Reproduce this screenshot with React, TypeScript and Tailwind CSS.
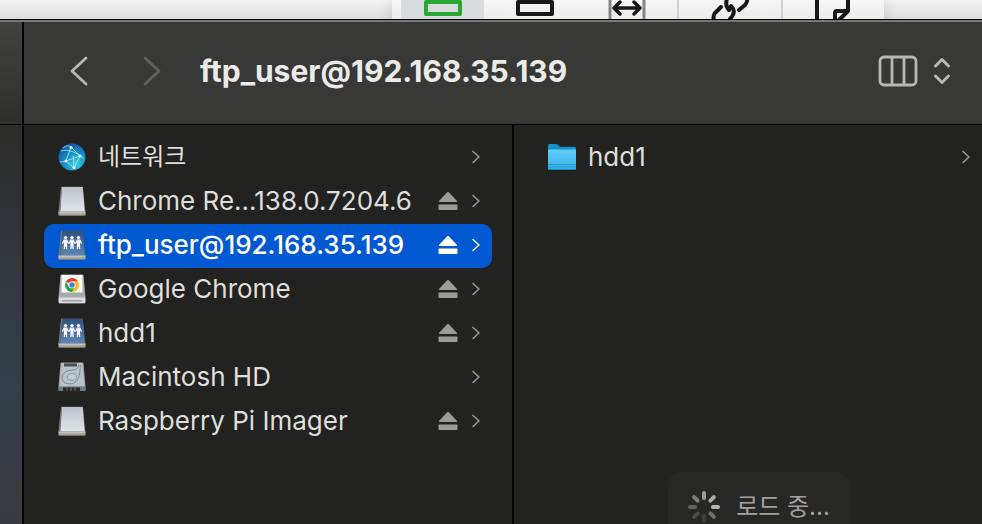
import clsx from "clsx";

type IconName = "network" | "disk" | "server" | "chrome" | "hdd";

type Entry = {
  name: string;
  icon: IconName;
  eject?: boolean;
  selected?: boolean;
  korean?: boolean;
};

const entries: Entry[] = [
  { name: "네트워크", icon: "network", korean: true },
  { name: "Chrome Re...138.0.7204.6", icon: "disk", eject: true },
  { name: "ftp_user@192.168.35.139", icon: "server", eject: true, selected: true },
  { name: "Google Chrome", icon: "chrome", eject: true },
  { name: "hdd1", icon: "server", eject: true },
  { name: "Macintosh HD", icon: "hdd" },
  { name: "Raspberry Pi Imager", icon: "disk", eject: true },
];

function Gradients() {
  return (
    <svg width="0" height="0" className="absolute" aria-hidden="true">
      <defs>
        <radialGradient id="globe" cx="0.65" cy="0.75" r="0.75">
          <stop offset="0" stopColor="#3fd0dc" />
          <stop offset="0.5" stopColor="#1a95cc" />
          <stop offset="1" stopColor="#1059a8" />
        </radialGradient>
        <linearGradient id="silver" x1="0" y1="0" x2="0" y2="1">
          <stop offset="0" stopColor="#bcc4ca" />
          <stop offset="1" stopColor="#dfe5e9" />
        </linearGradient>
        <linearGradient id="blue" x1="0" y1="0" x2="0" y2="1">
          <stop offset="0" stopColor="#33527f" />
          <stop offset="1" stopColor="#5c86b8" />
        </linearGradient>
        <linearGradient id="base" x1="0" y1="0" x2="0" y2="1">
          <stop offset="0" stopColor="#d5d0c8" />
          <stop offset="1" stopColor="#8f8b84" />
        </linearGradient>
        <linearGradient id="folder" x1="0" y1="0" x2="0" y2="1">
          <stop offset="0" stopColor="#62cdf9" />
          <stop offset="1" stopColor="#36b0ea" />
        </linearGradient>
      </defs>
    </svg>
  );
}

function NetworkIcon() {
  return (
    <>
      <circle cx="14" cy="15" r="13.5" fill="url(#globe)" />
      <path
        d="M3 9c7-2 16 1 23 8M13 5 8 19l8 7 6-12-9-9M8 19l14-5M2 20l6-1M13 5C9 3 8 4 5 6M16 26l-1-12"
        fill="none"
        stroke="#b5f0f7"
        strokeWidth="1"
        opacity="0.75"
      />
      <g fill="#e7fcff">
        <circle cx="13" cy="5.500" r="1.500" />
        <circle cx="8" cy="19" r="1.500" />
        <circle cx="22" cy="14" r="1.600" />
        <circle cx="16" cy="25.500" r="1.500" />
      </g>
    </>
  );
}

function Person({ x }: { x: number }) {
  return (
    <g transform={`translate(${x} 0)`} fill="#f4f8ff">
      <circle cx="0" cy="7.600" r="1.700" />
      <path d="M-1.800 9.500h3.600l1.800 4-1 .6-1.200-2 .4 6.900H.5L0 15.400-.5 19h-1.300l.4-6.900-1.200 2-1-.6z" />
    </g>
  );
}

function DiskIcon({ server }: { server?: boolean }) {
  return (
    <>
      <path d="M3.200.6h21.600L27.600 26H.4z" fill="#525456" />
      <path d="M4 1h20.800l2 24.500H2.300z" fill={server ? "url(#blue)" : "url(#silver)"} />
      <path d="M3.600.8 1.200 25.500" stroke="#8a8d90" strokeWidth="0.8" />
      <path d="M.4 25.400h27.200v3.200q0 1.200-1.200 1.200H1.600Q.4 29.800 .4 28.600z" fill="url(#base)" />
      <circle cx="25.3" cy="27.8" r="0.9" fill="#35e03a" />
      {server && (
        <>
          <Person x={7.5} />
          <Person x={14} />
          <Person x={20.5} />
        </>
      )}
    </>
  );
}

function ChromeIcon() {
  return (
    <>
      <path d="M2.500 1.500Q2.600 .5 3.600 .5h20.800q1 0 1.100 1L27.500 23v5q0 1.500-1.500 1.500H2Q.5 29.500 .5 28v-5z" fill="#a6a8aa" />
      <path d="M3.500 1h21v17.500h-21z" fill="#f5f6f7" />
      <path d="M.8 23.500h26.400V28q0 1-1 1H1.800q-1 0-1-1z" fill="#dcdddf" />
      <path d="M4 26h20v1.500H4z" fill="#9a9c9e" />
      <path d="M14 11 8 7.500A7 7 0 0 1 20.100 7.500H14z" fill="#e33b2e" />
      <path d="M14 11V7.500h6.100A7 7 0 0 1 14 18l3-5.200z" fill="#fbc116" />
      <path d="M14 11l3 1.800L14 18A7 7 0 0 1 8 7.500l3 5.300z" fill="#28a147" />
      <circle cx="14" cy="11" r="3.500" fill="#fff" />
      <circle cx="14" cy="11" r="2.700" fill="#3f7fe8" />
    </>
  );
}

function HddIcon() {
  return (
    <>
      <path d="M2.500 1.500Q2.600 .5 3.600 .5h20.800q1 0 1.100 1L27.500 24v4q0 1-1 1h-25q-1 0-1-1v-4z" fill="#98a1a6" />
      <path d="M3.500 1h21l2 23.500h-25z" fill="#b8c3c9" />
      <path d="M6 1.300h13v3.200H6z" fill="#4b5357" />
      <path
        d="M22.500 3c-1 7 0 11-4 16-3 4-12 4-14-1-2-6 4-10 10-10 4 0 6-2 6-5"
        fill="none"
        stroke="#77838a"
        strokeWidth="0.9"
      />
      <ellipse cx="14" cy="15" rx="4.500" ry="3.300" fill="#c3cdd2" stroke="#7e8a91" strokeWidth="0.8" />
      <path d="M.6 24.500h26.800V28q0 1-1 1H1.600q-1 0-1-1z" fill="#737a7d" />
      <path d="M5 25.500h17V29H5z" fill="#272a2b" />
      <path d="M9 26.500v2.500M13 26v3M17 26v3" stroke="#777" />
    </>
  );
}

function FileIcon({ name }: { name: IconName }) {
  return (
    <svg viewBox="0 0 28 30" className="h-[30px] w-7 shrink-0" aria-hidden="true">
      {name === "network" && <NetworkIcon />}
      {name === "disk" && <DiskIcon />}
      {name === "server" && <DiskIcon server />}
      {name === "chrome" && <ChromeIcon />}
      {name === "hdd" && <HddIcon />}
    </svg>
  );
}

function FolderIcon() {
  return (
    <svg viewBox="0 0 28 28" className="h-7 w-7 shrink-0" aria-hidden="true">
      <path d="M0 2.500Q0 1 1.500 1H8q1 0 2 1l1.200 1.200q.6 .6 1.600 .6h13.700Q28 3.800 28 5.500V10H0z" fill="#168fcb" />
      <path d="M0 7.500Q0 6.500 1 6.500h26q1 0 1 1v17.800q0 1.500-1.500 1.500h-25Q0 26.800 0 25.300z" fill="url(#folder)" />
      <path d="M0 21.500h28M0 24h28" stroke="#2194cf" strokeWidth="0.8" />
      <path d="M.5 26.500h27" stroke="#168bc7" />
    </svg>
  );
}

function RowChevron() {
  return (
    <svg viewBox="0 0 8 14" className="h-3.5 w-2 shrink-0" aria-hidden="true">
      <path d="m1 1.500 6 5.500-6 5.500" fill="none" stroke="currentColor" strokeWidth="1.500" strokeLinecap="round" strokeLinejoin="round" />
    </svg>
  );
}

function EjectIcon() {
  return (
    <svg viewBox="0 0 20 20" className="h-5 w-5" fill="currentColor" aria-hidden="true">
      <path d="M9.200 1.300q.8-.7 1.600 0l8 8.500q.8 1.200-.5 1.200H1.700q-1.300 0-.5-1.200z" />
      <rect x="0.500" y="13.500" width="19" height="5.500" rx="1" />
    </svg>
  );
}

function Row({ entry }: { entry: Entry }) {
  return (
    <li
      className={clsx(
        "flex h-11 items-center rounded-[10px] pb-0.5 pl-3.5 pr-3",
        entry.selected ? "bg-[#0059d1] font-medium text-white" : "text-[#dededc]"
      )}
    >
      <FileIcon name={entry.icon} />
      <span className={clsx("ml-3 flex-1 truncate", entry.korean && "text-2xl")}>{entry.name}</span>
      <span className={clsx("flex items-center gap-3.5", entry.selected ? "text-white" : "text-[#9b9b9a]")}>
        {entry.eject && (
          <button type="button" aria-label={`Eject ${entry.name}`}>
            <EjectIcon />
          </button>
        )}
        <RowChevron />
      </span>
    </li>
  );
}

function TopToolbar() {
  return (
    <div className="h-[19px] shrink-0 overflow-hidden bg-linear-to-b from-[#f4f4f4] to-[#dedede]">
      <div className="ml-[392px] flex h-10 w-[492px] bg-linear-to-b from-[#f7f7f7] to-[#dfdfdf] px-[9px] text-[#17181a] shadow-[0_0_16px_rgba(0,0,0,0.14)]">
        <button type="button" aria-label="Green box" className="flex w-[83px] justify-center bg-[#d9dcdf] text-[#27a833]">
          <svg viewBox="0 0 38 20" className="h-5 w-[38px]" fill="none" stroke="currentColor" strokeWidth="4">
            <rect x="2" y="2" width="34" height="12" strokeLinejoin="round" />
          </svg>
        </button>
        <button type="button" aria-label="Box" className="flex w-[101px] justify-center">
          <svg viewBox="0 0 38 20" className="h-5 w-[38px]" fill="none" stroke="currentColor" strokeWidth="4">
            <rect x="2" y="2" width="34" height="12" strokeLinejoin="round" />
          </svg>
        </button>
        <button type="button" aria-label="Width" className="flex w-[94px] justify-center border-r-2 border-[#cdd1d4] pr-2">
          <svg viewBox="0 0 38 20" className="h-5 w-[38px]" fill="none">
            <path d="M2 0v20M36 0v20" stroke="#858585" strokeWidth="3" />
            <path d="M6 8h26M12 2 6 8l6 6M26 2l6 6-6 6" stroke="currentColor" strokeWidth="3.500" strokeLinecap="round" strokeLinejoin="round" />
          </svg>
        </button>
        <button type="button" aria-label="Link" className="flex w-[104px] justify-center border-r-2 border-[#cdd1d4]">
          <svg viewBox="0 0 40 20" className="h-5 w-10" fill="none" stroke="currentColor" strokeWidth="4" strokeLinecap="round">
            <path d="M11 7 5 13q-3 4 0 10M18-4q-4 9 1 14M21 6q6 6-1 13M29 10l6-5q3-3 2-8" />
          </svg>
        </button>
        <button type="button" aria-label="Note" className="flex flex-1 justify-center pl-2">
          <svg viewBox="0 0 36 20" className="h-5 w-9" fill="none" stroke="currentColor" strokeWidth="4" strokeLinejoin="round">
            <path d="M2-2v24M33-2v13L23 21M20 21v-8q0-2 2-2h11" />
          </svg>
        </button>
      </div>
    </div>
  );
}

function Header() {
  return (
    <header className="flex h-[103px] shrink-0 items-center border-b border-black bg-[#383836] pb-1 pl-11 pr-8 text-[#b7b7b5]">
      <button type="button" aria-label="Back">
        <svg viewBox="0 0 20 30" className="h-[30px] w-5" fill="none" stroke="currentColor" strokeWidth="2.800" strokeLinecap="round" strokeLinejoin="round">
          <path d="M18 2 4 15l14 13" />
        </svg>
      </button>
      <button type="button" aria-label="Forward" disabled className="ml-[53px] text-[#60605e]">
        <svg viewBox="0 0 20 30" className="h-[30px] w-5" fill="none" stroke="currentColor" strokeWidth="2.800" strokeLinecap="round" strokeLinejoin="round">
          <path d="m4 2 14 13L4 28" />
        </svg>
      </button>
      <h1 className="ml-[39px] flex-1 truncate text-[30px] leading-[44px] font-bold text-[#ebebe9]">ftp_user@192.168.35.139</h1>
      <button type="button" aria-label="Column view" className="flex items-center gap-4">
        <svg viewBox="0 0 40 32" className="h-8 w-10" fill="none" stroke="currentColor" strokeWidth="2.800">
          <rect x="2" y="2" width="36" height="28" rx="4" />
          <path d="M14 2v28M26 2v28" />
        </svg>
        <svg viewBox="0 0 16 28" className="h-7 w-4" fill="none" stroke="currentColor" strokeWidth="3" strokeLinecap="round" strokeLinejoin="round">
          <path d="m1.500 9 6.500-6.500L14.500 9M1.500 19l6.500 6.500 6.500-6.500" />
        </svg>
      </button>
    </header>
  );
}

const spokes = ["#9c9c9b", "#a8a8a7", "#b5b5b4", "#70706f", "#40403f", "#4a4a49", "#626261", "#7e7e7d"];

function Loading() {
  return (
    <div role="status" className="-mb-[18px] ml-[22px] mt-auto flex h-[70px] shrink-0 items-center gap-4 self-center rounded-[14px] bg-[#272726] pl-5 pr-5 text-2xl text-[#a0a09f]">
      <svg viewBox="-16 -16 32 32" className="size-8" strokeWidth="4" strokeLinecap="round" aria-hidden="true">
        {spokes.map((color, i) => (
          <path key={i} d="M0-14v5" stroke={color} transform={`rotate(${i * 45})`} />
        ))}
      </svg>
      <span>로드 중...</span>
    </div>
  );
}

export default function App() {
  return (
    <div className="flex h-screen flex-col overflow-hidden bg-black font-['Inter','Noto_Sans_CJK_KR',sans-serif] text-[26px] leading-9">
      <Gradients />
      <TopToolbar />
      <div className="mt-px flex min-h-0 flex-1 border-t-2 border-[#777776]">
        <aside className="flex w-6 shrink-0 flex-col border-r-2 border-black">
          <div className="h-[103px] shrink-0 border-b border-black bg-linear-to-b from-[#424241] to-[#2e2e2d]" />
          <div className="flex-1 bg-linear-to-b from-[#2d2d2b] via-[#34404a] via-65% to-[#38393d]" />
        </aside>
        <main className="flex min-w-0 flex-1 flex-col">
          <Header />
          <div className="flex min-h-0 flex-1 bg-[#222220]">
            <ul className="w-[490px] shrink-0 border-r-2 border-black px-5 pt-[11px]">
              {entries.map((entry) => (
                <Row key={entry.name} entry={entry} />
              ))}
            </ul>
            <section className="flex min-w-0 flex-1 flex-col">
              <ul className="pl-5 pt-[11px]">
                <li className="flex h-11 items-center pb-0.5 pl-3.5 pr-3 text-[#dededc]">
                  <FolderIcon />
                  <span className="ml-3 flex-1 truncate">hdd1</span>
                  <span className="text-[#9b9b9a]">
                    <RowChevron />
                  </span>
                </li>
              </ul>
              <Loading />
            </section>
          </div>
        </main>
      </div>
    </div>
  );
}
